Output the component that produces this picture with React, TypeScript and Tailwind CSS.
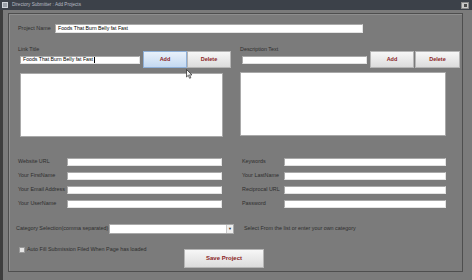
import React from 'react';

const font = { fontFamily: '"Liberation Sans", Arial, sans-serif' };

const Input: React.FC<{ className?: string; value?: string; caret?: boolean }> = ({ className = '', value, caret }) => (
  <div
    className={`bg-white border border-[#a9a9a9] border-b-[#e3e3e3] border-r-[#e3e3e3] flex items-center pl-[2px] text-[5.2px] leading-none text-black overflow-hidden whitespace-nowrap ${className}`}
  >
    {value}
    {caret && <span className="inline-block w-px h-[6px] bg-black ml-px" />}
  </div>
);

const Button: React.FC<{ label: string; className?: string; hover?: boolean }> = ({ label, className = '', hover }) => (
  <div
    className={`flex items-center justify-center border text-[5.5px] font-bold text-[#8a1c24] ${
      hover
        ? 'bg-gradient-to-b from-[#e8f1fb] to-[#c4d9f1] border-[#8fb0d8]'
        : 'bg-gradient-to-b from-[#f7f7f7] to-[#dcdcdc] border-[#b5b5b5]'
    } ${className}`}
  >
    {label}
  </div>
);

const Label: React.FC<{ text: string; className?: string }> = ({ text, className = '' }) => (
  <div className={`text-[5.4px] leading-none text-[#2e2e2e] whitespace-nowrap ${className}`}>{text}</div>
);

const leftFields = ['Website URL', 'Your FirstName', 'Your Email Address', 'Your UserName'];
const rightFields = ['Keywords', 'Your LastName', 'Reciprocal URL', 'Password'];

export default function App() {
  return (
    <div className="w-[472px] h-[280px] bg-[#7b7b7b] flex flex-col overflow-hidden relative" style={font}>
      {/* title bar */}
      <div className="h-[10px] bg-[#3c4149] flex items-center pl-[2px] pr-[3px]">
        <div className="w-[6px] h-[6px] bg-[#9aa0a8] border border-[#d0d4da]" />
        <div className="ml-[4px] text-[4.6px] leading-none text-[#b7bcc4]">Directory Submitter : Add Projects</div>
        <div className="ml-auto w-[8px] h-[7px] bg-[#c9c9c9] border border-[#8a8a8a] flex items-center justify-center">
          <div className="w-[3px] h-[3px] bg-[#4a4a4a]" />
        </div>
      </div>

      {/* body */}
      <div className="flex-1 flex border-l-[3px] border-[#3e3e3e]">
        <div className="ml-[5px] mt-[3px] w-[455px] h-[259px] border border-[#4e4e4e] shadow-[inset_1px_1px_0_#8e8e8e] flex flex-col">
          {/* project name */}
          <div className="mt-[10px] pl-[9px] flex items-center">
            <Label text="Project Name" className="w-[37px]" />
            <Input className="w-[308px] h-[9px]" value="Foods That Burn Belly fat Fast" />
          </div>

          {/* link / description */}
          <div className="mt-[14px] pl-[9px] flex items-end">
            <div className="flex flex-col">
              <Label text="Link Title" className="h-[6px]" />
              <Input className="ml-[2px] mt-[3px] mb-[4px] w-[120px] h-[8px]" value="Foods That Burn Belly fat Fast" caret />
            </div>
            <Button label="Add" hover className="ml-[3px] w-[44px] h-[17px]" />
            <Button label="Delete" className="w-[44px] h-[17px]" />

            <div className="ml-[9px] flex flex-col">
              <Label text="Description Text" className="h-[6px]" />
              <Input className="ml-[2px] mt-[3px] mb-[4px] w-[125px] h-[8px]" />
            </div>
            <Button label="Add" className="ml-[3px] w-[44px] h-[17px]" />
            <Button label="Delete" className="ml-[1px] w-[45px] h-[17px]" />
          </div>

          {/* lists */}
          <div className="mt-[4px] pl-[11px] flex items-start">
            <div className="mt-[1px] w-[203px] h-[64px] bg-white border border-[#a9a9a9]" />
            <div className="ml-[17px] w-[206px] h-[64px] bg-white border border-[#a9a9a9]" />
          </div>

          {/* fields */}
          <div className="mt-[21px] pl-[9px] flex">
            <div className="flex flex-col gap-[6px]">
              {leftFields.map((f) => (
                <div key={f} className="flex items-center">
                  <Label text={f} className="w-[49px]" />
                  <Input className="w-[155px] h-[8px]" />
                </div>
              ))}
            </div>
            <div className="ml-[20px] flex flex-col gap-[6px]">
              {rightFields.map((f) => (
                <div key={f} className="flex items-center">
                  <Label text={f} className="w-[42px]" />
                  <Input className="w-[162px] h-[8px]" />
                </div>
              ))}
            </div>
          </div>

          {/* category */}
          <div className="mt-[16px] pl-[7px] flex items-center">
            <Label text="Category Selection(comma separated)" className="w-[93px]" />
            <div className="w-[125px] h-[10px] bg-white border border-[#a9a9a9] flex justify-end">
              <div className="w-[7px] h-full bg-[#eeeeee] border-l border-[#c8c8c8] flex items-center justify-center text-[4px] text-[#333]">
                ▼
              </div>
            </div>
            <Label text="Select From the list or enter your own category" className="ml-[10px]" />
          </div>

          {/* bottom */}
          <div className="mt-[13px] pl-[10px] flex items-start">
            <div className="w-[165px] flex items-center">
              <div className="w-[6px] h-[6px] bg-[#e6e6e6] border border-[#9a9a9a]" />
              <Label text="Auto Fill Submission Filed When Page has loaded" className="ml-[2px]" />
            </div>
            <Button label="Save Project" className="mt-[2px] w-[80px] h-[19px] text-[6px]" />
          </div>
        </div>
      </div>

      {/* mouse cursor */}
      <svg className="absolute left-[186px] top-[69px]" width="7" height="10" viewBox="0 0 7 10">
        <path d="M0.5 0.5 L0.5 8 L2.3 6.3 L3.6 9.3 L4.8 8.8 L3.6 5.9 L6 5.9 Z" fill="#f2f2f2" stroke="#222" strokeWidth="0.7" />
      </svg>
    </div>
  );
}
